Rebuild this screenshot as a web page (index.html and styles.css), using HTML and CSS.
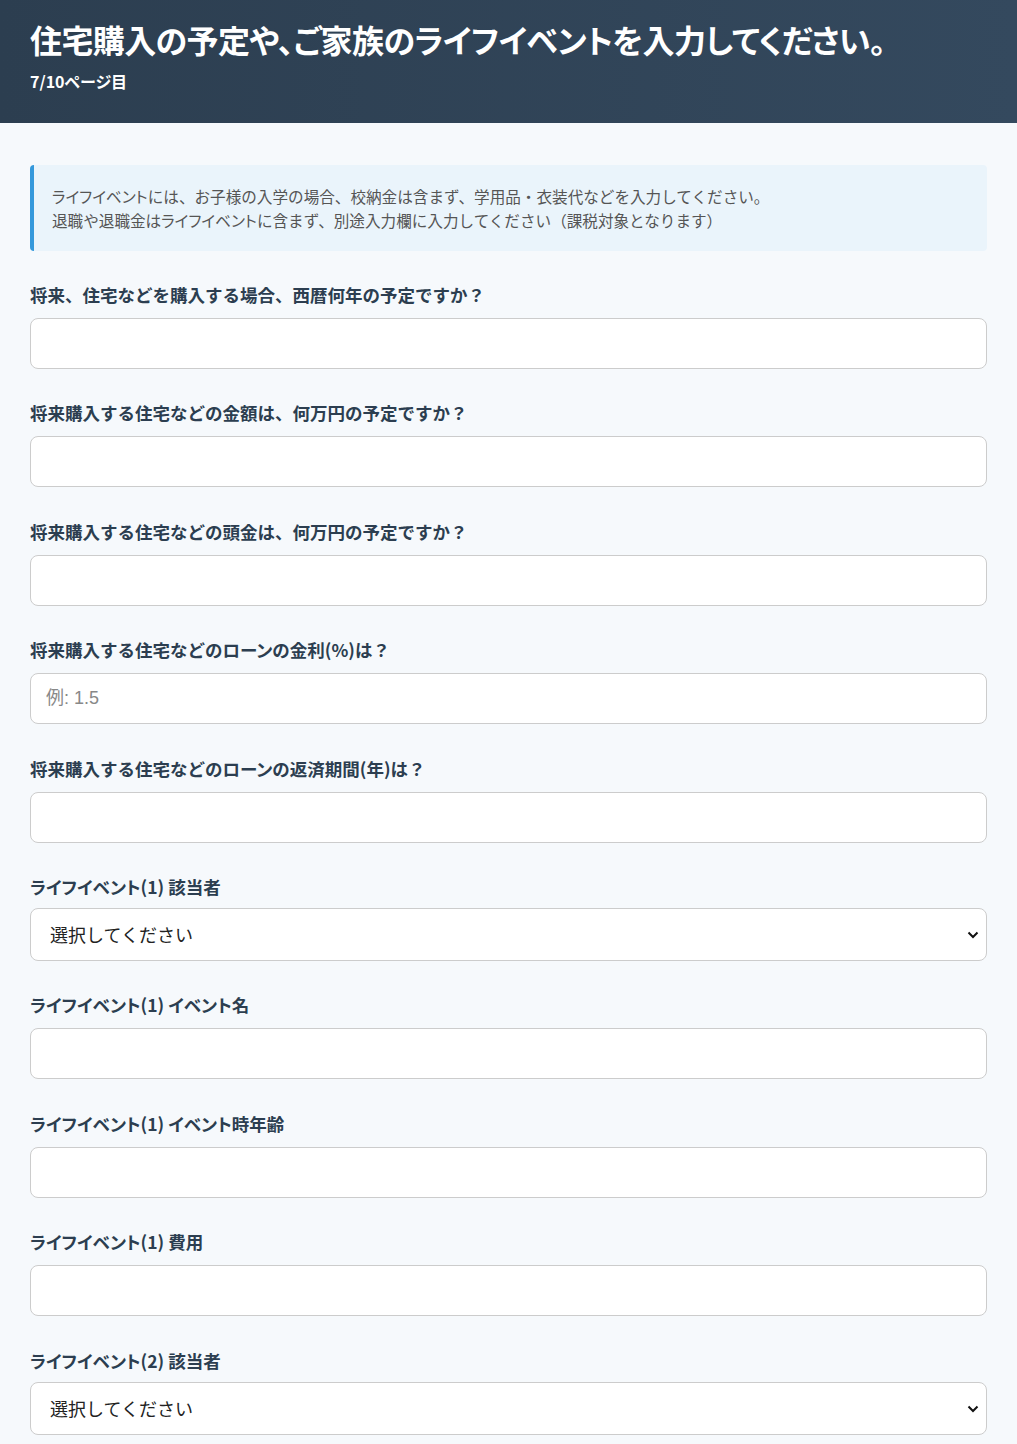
FILE: index.html
```html
<!DOCTYPE html>
<html lang="ja">
<head>
  <meta charset="UTF-8">
  <meta name="viewport" content="width=device-width, initial-scale=1.0">
  <title>ライフプラン入力 7/10</title>
  <link rel="stylesheet" href="styles.css">
</head>
<body>
  <header class="page-header">
    <h1>住宅購入の予定や、ご家族のライフイベントを入力してください。</h1>
    <p class="page-count">7/10ページ目</p>
  </header>

  <main class="container">
    <div class="notice">
      <span class="kana">ライフイベント</span>には、お子様の入学の場合、校納金は含まず、学用品・衣装代などを入力してください。<br>
      退職や退職金は<span class="kana">ライフイベント</span>に含まず、別途入力欄に入力してください（課税対象となります）
    </div>

    <div class="form-group">
      <label for="house_year">将来、住宅などを購入する場合、西暦何年の予定ですか？</label>
      <input type="text" id="house_year">
    </div>

    <div class="form-group">
      <label for="house_price">将来購入する住宅などの金額は、何万円の予定ですか？</label>
      <input type="text" id="house_price">
    </div>

    <div class="form-group">
      <label for="house_down">将来購入する住宅などの頭金は、何万円の予定ですか？</label>
      <input type="text" id="house_down">
    </div>

    <div class="form-group">
      <label for="loan_rate">将来購入する住宅などの<span class="kana">ローン</span>の金利(%)は？</label>
      <input type="text" id="loan_rate" placeholder="例: 1.5">
    </div>

    <div class="form-group">
      <label for="loan_years">将来購入する住宅などの<span class="kana">ローン</span>の返済期間(年)は？</label>
      <input type="text" id="loan_years">
    </div>

    <div class="form-group">
      <label for="event1_who"><span class="kana">ライフイベント</span>(1) 該当者</label>
      <div class="select-wrap">
        <select id="event1_who">
          <option>選択してください</option>
        </select>
        <svg class="chevron" width="12" height="8" viewBox="0 0 12 8"><path d="M1.5 1.5 6 6l4.5-4.5" fill="none" stroke="#111" stroke-width="2"/></svg>
      </div>
    </div>

    <div class="form-group">
      <label for="event1_name"><span class="kana">ライフイベント</span>(1) <span class="kana">イベント</span>名</label>
      <input type="text" id="event1_name">
    </div>

    <div class="form-group">
      <label for="event1_age"><span class="kana">ライフイベント</span>(1) <span class="kana">イベント</span>時年齢</label>
      <input type="text" id="event1_age">
    </div>

    <div class="form-group">
      <label for="event1_cost"><span class="kana">ライフイベント</span>(1) 費用</label>
      <input type="text" id="event1_cost">
    </div>

    <div class="form-group">
      <label for="event2_who"><span class="kana">ライフイベント</span>(2) 該当者</label>
      <div class="select-wrap">
        <select id="event2_who">
          <option>選択してください</option>
        </select>
        <svg class="chevron" width="12" height="8" viewBox="0 0 12 8"><path d="M1.5 1.5 6 6l4.5-4.5" fill="none" stroke="#111" stroke-width="2"/></svg>
      </div>
    </div>
  </main>
</body>
</html>
```

FILE: styles.css
```css
:root {
  --header-from: #2c3e50;
  --header-to: #34495e;
  --bg-color: #f6f9fc;
  --text-label: #2c3e50;
  --text-notice: #555555;
  --notice-bg: #eaf4fb;
  --notice-border: #3498db;
  --border: #cccccc;
}

* {
  box-sizing: border-box;
}

body {
  font-family: "Noto Sans CJK JP", "Noto Sans", sans-serif;
  background-color: var(--bg-color);
  margin: 0;
  padding: 0;
  -webkit-font-smoothing: antialiased;
}

.page-header {
  background: linear-gradient(90deg, var(--header-from), var(--header-to));
  color: #ffffff;
  height: 123px;
  padding: 17px 30px 0;
}

.page-header h1 {
  font-size: 32px;
  font-weight: 700;
  line-height: 44px;
  margin: 0;
  font-feature-settings: "palt";
  letter-spacing: -0.6px;
}

.page-count {
  font-size: 16px;
  font-weight: 700;
  line-height: 24px;
  margin: 8px 0 0;
  font-feature-settings: "palt";
}

.container {
  padding: 42px 30px 0;
}

.notice {
  background-color: var(--notice-bg);
  border-left: 4px solid var(--notice-border);
  border-radius: 4px;
  padding: 19px 18px 19px;
  font-size: 15.6px;
  line-height: 24px;
  color: var(--text-notice);
  margin-bottom: 32px;
}

/* katakana runs are set proportional, like the original font */
.kana {
  font-feature-settings: "palt";
}

.form-group {
  margin-bottom: 32.4px;
}

label {
  display: block;
  font-size: 17.5px;
  font-weight: 700;
  line-height: 24px;
  color: var(--text-label);
  margin-bottom: 11px;
}

input,
select {
  display: block;
  width: 100%;
  height: 51px;
  padding: 0 15px;
  font-family: "Liberation Sans", "Noto Sans CJK JP", sans-serif;
  font-size: 18px;
  color: #222222;
  background-color: #ffffff;
  border: 1px solid var(--border);
  border-radius: 8px;
}

input::placeholder {
  color: #888888;
}

input:focus,
select:focus {
  outline: none;
  border-color: var(--notice-border);
}

.select-wrap {
  position: relative;
  margin-top: -2px;
}

select {
  height: 53px;
  padding: 0 19px;
  font-family: "Noto Sans CJK JP", sans-serif;
  -webkit-appearance: none;
  appearance: none;
}

.chevron {
  position: absolute;
  right: 8px;
  top: 23px;
  pointer-events: none;
}
```
